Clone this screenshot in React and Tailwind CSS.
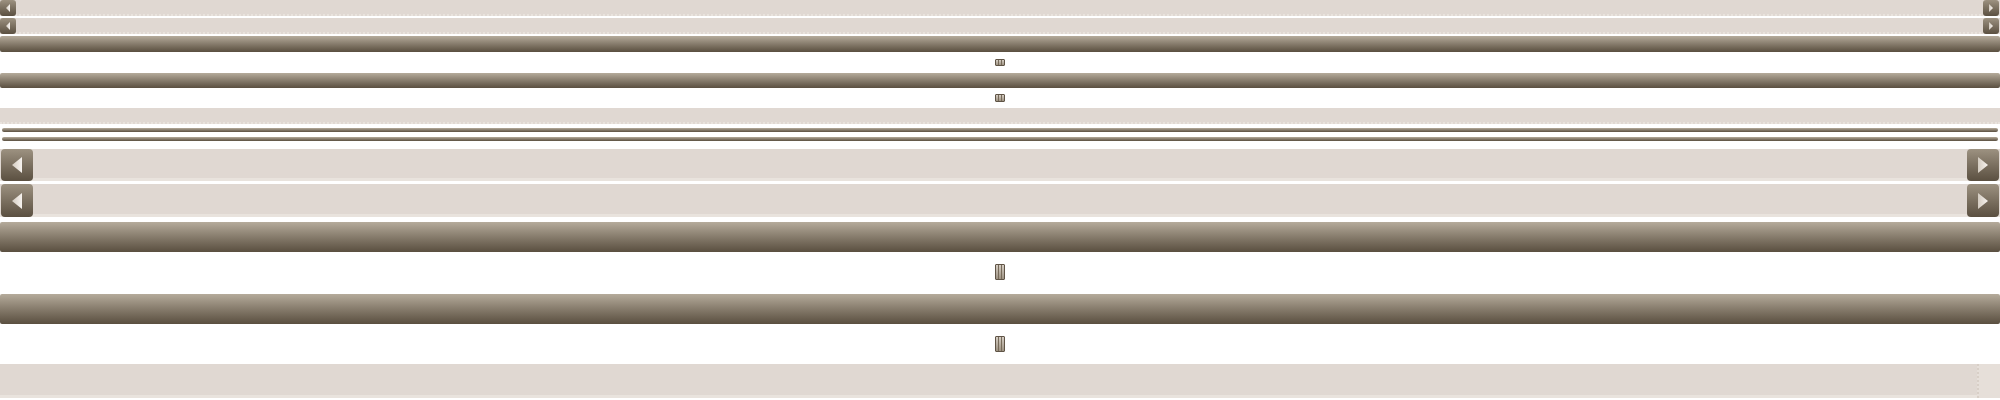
import React from "react";

function Tri({ dir, w, h }) {
  const id = `tg${w}${dir}`;
  return (
    <svg width={w} height={h} viewBox={`0 0 ${w} ${h}`} className="block">
      <defs>
        <linearGradient id={id} x1="0" y1="0" x2="1" y2="0">
          <stop offset="0" stopColor="#d4ccc1" />
          <stop offset="1" stopColor="#f7f3ef" />
        </linearGradient>
      </defs>
      {dir === "left" ? (
        <polygon points={`0,${h / 2} ${w},0 ${w},${h}`} fill={`url(#${id})`} />
      ) : (
        <polygon points={`0,0 ${w},${h / 2} 0,${h}`} fill={`url(#${id})`} />
      )}
    </svg>
  );
}

function SmallScroll() {
  return (
    <div className="flex h-[16px] w-full items-stretch bg-[#e0d8d2] border-b-[2px] border-dotted border-b-[#e9e3dd]">
      <div className="-mb-[2px] flex w-[16px] items-center justify-center rounded-[3px] bg-gradient-to-b from-[#9d9281] to-[#5b5041]">
        <Tri dir="left" w={4} h={8} />
      </div>
      <div className="flex-1" />
      <div className="-mb-[2px] mr-[1px] flex w-[16px] items-center justify-center rounded-[3px] bg-gradient-to-b from-[#9d9281] to-[#5b5041]">
        <Tri dir="right" w={4} h={8} />
      </div>
    </div>
  );
}

function BigScroll({ h }) {
  return (
    <div className={`flex ${h} w-full items-stretch bg-[#e0d8d2] border-b-[3px] border-b-[#e9e3dd]`}>
      <div className="-mb-[3px] ml-[1px] flex w-[32px] items-center justify-center rounded-[4px] bg-gradient-to-b from-[#9d9281] to-[#5b5041]">
        <Tri dir="left" w={10} h={16} />
      </div>
      <div className="flex-1" />
      <div className="-mb-[3px] mr-[1px] flex w-[32px] items-center justify-center rounded-[4px] bg-gradient-to-b from-[#9d9281] to-[#5b5041]">
        <Tri dir="right" w={10} h={16} />
      </div>
    </div>
  );
}

function Thumb({ h }) {
  return (
    <div className={`relative w-[10px] ${h} overflow-hidden rounded-[1px] border border-[#5f5446] bg-[image:repeating-linear-gradient(90deg,#eee8e1_0px,#eee8e1_2px,#6f6455_2px,#6f6455_3px)]`}>
      <div className="absolute inset-0 bg-gradient-to-b from-[#8a7d6a]/25 to-[#7a6d5a]/70" />
    </div>
  );
}

const bar = "w-full rounded-[2px] bg-gradient-to-b from-[#b5ab9b] to-[#5a4f40]";

export default function App() {
  return (
    <div className="flex h-[400px] w-[2000px] flex-col bg-white">
      <SmallScroll />
      <div className="h-[2px] shrink-0" />
      <SmallScroll />
      <div className="h-[2px] shrink-0" />
      <div className={`h-[16px] shrink-0 ${bar}`} />
      <div className="flex h-[21px] shrink-0 items-start justify-center pt-[7px]">
        <Thumb h="h-[7px]" />
      </div>
      <div className={`h-[15px] shrink-0 ${bar}`} />
      <div className="flex h-[20px] shrink-0 items-start justify-center pt-[6px]">
        <Thumb h="h-[8px]" />
      </div>
      <div className="h-[16px] w-full shrink-0 bg-[#e0d8d2] border-b-[2px] border-dotted border-b-[#e9e3dd]" />
      <div className="h-[4px] shrink-0" />
      <div className="mx-[2px] h-[4px] shrink-0 rounded-full bg-gradient-to-b from-[#b5ab9b] to-[#5a4f40]" />
      <div className="h-[5px] shrink-0" />
      <div className="mx-[2px] h-[4px] shrink-0 rounded-full bg-gradient-to-b from-[#b5ab9b] to-[#5a4f40]" />
      <div className="h-[8px] shrink-0" />
      <BigScroll h="h-[32px] shrink-0" />
      <div className="h-[3px] shrink-0" />
      <BigScroll h="h-[33px] shrink-0" />
      <div className="h-[5px] shrink-0" />
      <div className={`h-[30px] shrink-0 ${bar}`} />
      <div className="flex h-[42px] shrink-0 items-start justify-center pt-[12px]">
        <Thumb h="h-[16px]" />
      </div>
      <div className={`h-[30px] shrink-0 ${bar}`} />
      <div className="flex h-[40px] shrink-0 items-start justify-center pt-[12px]">
        <Thumb h="h-[16px]" />
      </div>
      <div className="flex h-[34px] w-full shrink-0 bg-[#e0d8d2] border-b-[3px] border-b-[#e9e3dd]">
        <div className="flex-1" />
        <div className="-mb-[3px] w-[23px] bg-[#e6dfd9] border-l-2 border-dotted border-l-[#d8cfc7]" />
      </div>
    </div>
  );
}
